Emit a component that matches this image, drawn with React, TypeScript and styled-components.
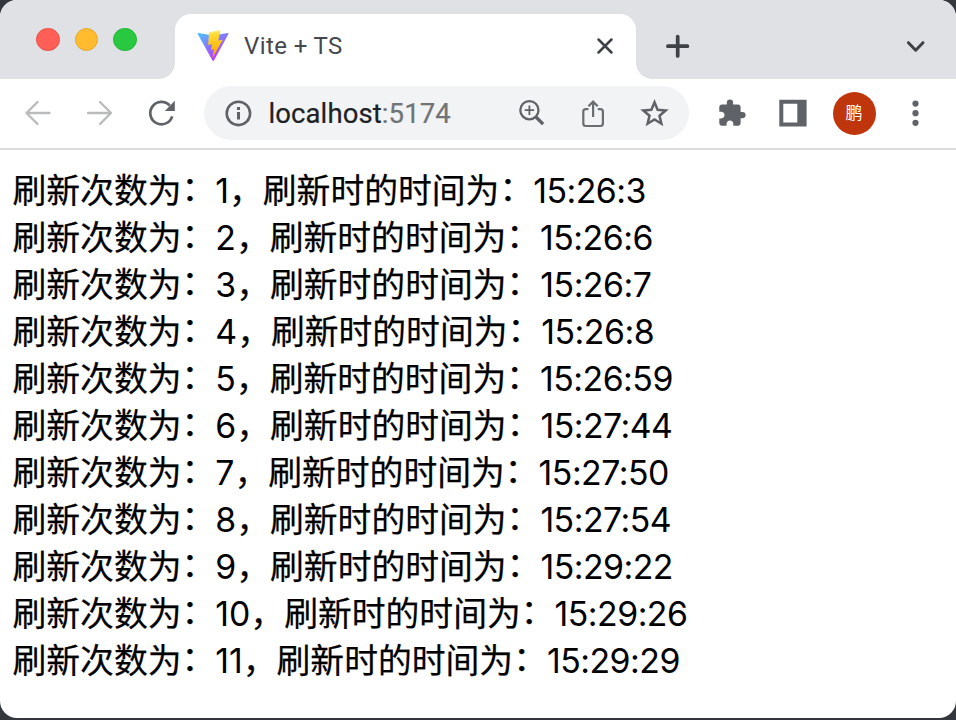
import React from "react";
import styled, { createGlobalStyle } from "styled-components";

const GlobalStyle = createGlobalStyle`
  *, *::before, *::after { box-sizing: border-box; }
  body { margin: 0; background: #34373e; overflow: hidden; }
`;

const Window = styled.div`
  width: 956px;
  height: 718px;
  display: flex;
  flex-direction: column;
  background: #fff;
  border-radius: 17px;
  overflow: hidden;
  font-family: Inter, "Noto Sans CJK SC", sans-serif;
`;

const TabStrip = styled.header`
  height: 79px;
  flex: none;
  display: flex;
  background: #dfe1e5;
`;

const TrafficLights = styled.div`
  width: 175px;
  height: 79px;
  padding: 27.5px 0 0 36px;
  display: flex;
  gap: 15px;
`;

const Light = styled.span<{ $fill: string; $edge: string }>`
  width: 23.5px;
  height: 23.5px;
  border-radius: 50%;
  background: ${(p) => p.$fill};
  border: 1px solid ${(p) => p.$edge};
`;

const Tab = styled.div`
  position: relative;
  width: 460.5px;
  height: 65.5px;
  margin-top: 13.5px;
  padding: 0 19px 0 22px;
  display: flex;
  align-items: center;
  background: #fff;
  border-radius: 16px 16px 0 0;

  &::before, &::after {
    content: "";
    position: absolute;
    bottom: 0;
    width: 16px;
    height: 16px;
  }
  &::before {
    right: 100%;
    background: radial-gradient(circle at 0 0, transparent 15.5px, #fff 16px);
  }
  &::after {
    left: 100%;
    background: radial-gradient(circle at 100% 0, transparent 15.5px, #fff 16px);
  }
`;

const TabTitle = styled.span`
  flex: 1;
  margin-left: 15px;
  font-family: Roboto, sans-serif;
  font-size: 24px;
  line-height: 30px;
  letter-spacing: 0.4px;
  color: #45484c;
`;

const StripTools = styled.div`
  flex: 1;
  display: flex;
  align-items: center;
  justify-content: space-between;
  padding: 13px 28px 0 29.5px;
`;

const Toolbar = styled.nav`
  height: 71px;
  flex: none;
  padding: 0 0 1px 7.5px;
  display: flex;
  align-items: center;
  border-bottom: 2px solid #dadbdc;
`;

const ToolCell = styled.span`
  width: 61px;
  flex: none;
  display: flex;
  justify-content: center;
`;

const AddressBar = styled.div`
  width: 485px;
  height: 54px;
  margin: 0 12.5px 0 13.5px;
  padding: 0 5px 0 20px;
  display: flex;
  align-items: center;
  border-radius: 27px;
  background: #f1f3f4;
`;

const Address = styled.span`
  flex: 1;
  margin-left: 16.5px;
  padding-top: 2px;
  font-family: Roboto, sans-serif;
  font-size: 27.5px;
  line-height: 34px;
  letter-spacing: 0.1px;
  color: #202124;
  -webkit-text-stroke: 0.2px currentColor;
`;

const Port = styled.span`
  color: #717477;
`;

const Avatar = styled.span`
  width: 43px;
  height: 43px;
  border-radius: 50%;
  background: #bf360c;
  color: #fff;
  font-size: 17px;
  line-height: 43px;
  text-align: center;
  font-weight: 400;
`;

const Page = styled.main`
  flex: 1;
  padding: 17px 12.5px 0;
  color: #000;
  font-size: 33.8px;
`;

const LogRow = styled.div`
  height: 47.02px;
  line-height: 47px;
  white-space: nowrap;
`;

const Label = styled.span`
  -webkit-text-stroke: 0.25px #000;
`;

const Colon = styled.span`
  line-height: 30px;
  vertical-align: 2px;
  -webkit-text-stroke: 0.25px #000;
`;

const Comma = styled.span`
  -webkit-text-stroke: 0.25px #000;
`;

const Time = styled.span`
  letter-spacing: -0.5px;
`;

const Glyph = styled.svg`
  display: block;
  flex: none;
  overflow: visible;
`;

const ViteLogo = () => (
  <Glyph width="32" height="32" viewBox="0 0 32 32">
    <defs>
      <linearGradient id="shield" x1="0" y1="0" x2="18" y2="30" gradientUnits="userSpaceOnUse">
        <stop stopColor="#41d1ff" />
        <stop offset="1" stopColor="#bd34fe" />
      </linearGradient>
      <linearGradient id="bolt" x1="14" y1="2" x2="18" y2="25" gradientUnits="userSpaceOnUse">
        <stop stopColor="#ffea83" />
        <stop offset="0.1" stopColor="#ffdd35" />
        <stop offset="1" stopColor="#ffa800" />
      </linearGradient>
    </defs>
    <path fill="url(#shield)" d="M31.3 4.2 16.9 30.5a.8.8 0 0 1-1.4 0L.8 4.2a.8.8 0 0 1 .8-1.2L16 5.6 30.5 3a.8.8 0 0 1 .8 1.2Z" />
    <path fill="url(#bolt)" d="M23.4 0 12 2.2 11.200 15l4-.9-1.200 5.800 2.900-.9-1.500 9.200L25.700 9.800l-4.400.8Z" />
  </Glyph>
);

const CloseIcon = () => (
  <Glyph width="24" height="24" fill="none" stroke="#3e4145" strokeWidth="2.5" strokeLinecap="round">
    <path d="m5.5 5.5 13 13m0-13-13 13" />
  </Glyph>
);

const PlusIcon = () => (
  <Glyph width="24" height="24" fill="none" stroke="#3e4145" strokeWidth="3.7" strokeLinecap="round">
    <path d="M12.7 2.5v19.5M2.900 12.200h19.500" />
  </Glyph>
);

const ChevronIcon = () => (
  <Glyph width="24" height="24" fill="none" stroke="#3e4145" strokeWidth="3" strokeLinecap="round" strokeLinejoin="round">
    <path d="m4.4 8.7 7.3 7.5 7.3-7.5" />
  </Glyph>
);

const ArrowIcon = ({ forward = false }: { forward?: boolean }) => (
  <Glyph width="26" height="26" fill="none" stroke="#b9babc" strokeWidth="2.3" strokeLinecap="round" strokeLinejoin="round">
    <path d={forward ? "M2 13h23M14 2l11 11-11 11" : "M24.5 13h-23M12.5 2l-11 11 11 11"} />
  </Glyph>
);

const ReloadIcon = () => (
  <Glyph width="28" height="28" viewBox="-2.5 -.3 28 28">
    <path d="M23.7 17A11.2 11.2 0 1 1 21.2 6.2" fill="none" stroke="#5f6368" strokeWidth="2.7" />
    <path d="M26.3 1.5v10.2H16.3Z" fill="#5f6368" />
  </Glyph>
);

const InfoIcon = () => (
  <Glyph width="28" height="28" fill="none" stroke="#5f6368">
    <circle cx="14.4" cy="14.4" r="11.7" strokeWidth="2.6" />
    <path d="M14.5 13v7.5M14.5 8.1v2.8" strokeWidth="3" />
  </Glyph>
);

const ZoomIcon = () => (
  <Glyph width="28" height="28" fill="none" stroke="#5f6368">
    <circle cx="11.4" cy="11.2" r="9.1" strokeWidth="2.3" />
    <path d="m17.7 17.8 7.4 7.3" strokeWidth="3.4" />
    <path d="M6.7 11.2h9.4M11.4 6.5v9.4" strokeWidth="1.8" />
  </Glyph>
);

const ShareIcon = () => (
  <Glyph width="28" height="28" fill="none" stroke="#6b6e71" strokeWidth="2.2" strokeLinecap="round" strokeLinejoin="round">
    <path d="M8.6 10.1H6.8a2.5 2.5 0 0 0-2.5 2.5v11.9a2.5 2.5 0 0 0 2.5 2.5h14.6a2.5 2.5 0 0 0 2.5-2.5V12.6a2.5 2.5 0 0 0-2.5-2.5h-1.8" />
    <path d="M14.1 17.9V2.7M9.5 7.2 14.1 2.6l4.6 4.6" strokeLinecap="butt" strokeLinejoin="miter" />
  </Glyph>
);

const StarIcon = () => (
  <Glyph width="28" height="28" fill="none" stroke="#5f6368" strokeWidth="2.5">
    <path d="m14.5 3.3 3.1 7.5 8.1.7-6.2 5.3 1.9 7.9-6.900-4.200-6.900 4.200 1.900-7.900-6.200-5.300 8.100-.7Z" />
  </Glyph>
);

const PuzzleIcon = () => (
  <Glyph width="32" height="32" viewBox="0 0 24 24" fill="#5f6368">
    <path transform="translate(.6 .9) scale(.94)" d="M20.5 11H19V7c0-1.1-.9-2-2-2h-4V3.5a2.5 2.5 0 0 0-5 0V5H4c-1.1 0-2 .9-2 2v3.8h1.5c1.5 0 2.7 1.2 2.7 2.7S5 16.2 3.5 16.2H2V20c0 1.1.9 2 2 2h3.8v-1.5c0-1.5 1.2-2.7 2.7-2.7s2.7 1.2 2.7 2.7V22H17c1.1 0 2-.9 2-2v-4h1.5a2.5 2.5 0 0 0 0-5Z" />
  </Glyph>
);

const PanelIcon = () => (
  <Glyph width="28" height="28">
    <path fill="#5f6368" fillRule="evenodd" d="M.3.8h27.3v26.8H.3Zm4 4v18.8h14v-18.8Z" />
  </Glyph>
);

const MenuIcon = () => (
  <Glyph width="28" height="28" fill="#5f6368">
    <circle cx="14.5" cy="4.6" r="3.1" />
    <circle cx="14.5" cy="14.2" r="3.1" />
    <circle cx="14.5" cy="23.8" r="3.1" />
  </Glyph>
);

const refreshTimes = [
  "15:26:3",
  "15:26:6",
  "15:26:7",
  "15:26:8",
  "15:26:59",
  "15:27:44",
  "15:27:50",
  "15:27:54",
  "15:29:22",
  "15:29:26",
  "15:29:29",
];

export default function App() {
  return (
    <>
      <GlobalStyle />
      <Window lang="zh-CN">
        <TabStrip>
          <TrafficLights>
            <Light $fill="#ff5f57" $edge="#e9544d" />
            <Light $fill="#febc2e" $edge="#e5a72b" />
            <Light $fill="#28c840" $edge="#25b43a" />
          </TrafficLights>
          <Tab>
            <ViteLogo />
            <TabTitle>Vite + TS</TabTitle>
            <CloseIcon />
          </Tab>
          <StripTools>
            <PlusIcon />
            <ChevronIcon />
          </StripTools>
        </TabStrip>
        <Toolbar>
          <ToolCell><ArrowIcon /></ToolCell>
          <ToolCell><ArrowIcon forward /></ToolCell>
          <ToolCell><ReloadIcon /></ToolCell>
          <AddressBar>
            <InfoIcon />
            <Address>localhost<Port>:5174</Port></Address>
            <ToolCell><ZoomIcon /></ToolCell>
            <ToolCell><ShareIcon /></ToolCell>
            <ToolCell><StarIcon /></ToolCell>
          </AddressBar>
          <ToolCell><PuzzleIcon /></ToolCell>
          <ToolCell><PanelIcon /></ToolCell>
          <ToolCell><Avatar>鹏</Avatar></ToolCell>
          <ToolCell><MenuIcon /></ToolCell>
        </Toolbar>
        <Page>
          {refreshTimes.map((time, i) => (
            <LogRow key={time}>
              <Label>刷新次数为</Label>
              <Colon>：</Colon>
              {i + 1}
              <Comma>，</Comma>
              <Label>刷新时的时间为</Label>
              <Colon>：</Colon>
              <Time>{time}</Time>
            </LogRow>
          ))}
        </Page>
      </Window>
    </>
  );
}
